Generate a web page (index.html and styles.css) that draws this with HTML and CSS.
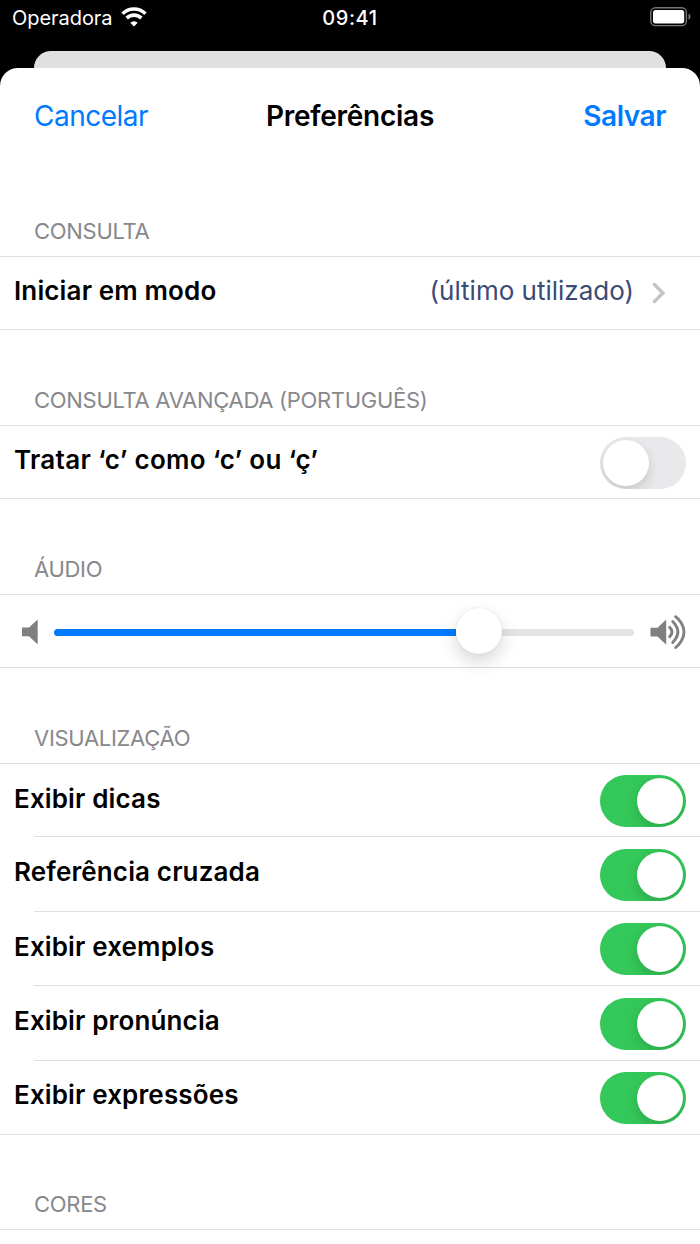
FILE: index.html
```
<!DOCTYPE html>
<html lang="pt-br">
<head>
    <meta charset="UTF-8">
    <meta name="viewport" content="width=device-width, initial-scale=1.0">
    <link rel="stylesheet" href="styles.css">
    <title>Preferências</title>
</head>
<body>
    <div class="status-bar">
        <div class="carrier">
            <span>Operadora</span>
            <svg class="wifi" width="26" height="20" viewBox="0 0 26 20">
                <path d="M1.6 6.7 A16.3 16.3 0 0 1 24.4 6.7" fill="none" stroke="#fff" stroke-width="3.6"/>
                <path d="M5.7 11.1 A10.4 10.4 0 0 1 20.3 11.1" fill="none" stroke="#fff" stroke-width="3.6"/>
                <path d="M13 19.4 L9.3 15.7 A5.3 5.3 0 0 1 16.7 15.7 Z" fill="#fff"/>
            </svg>
        </div>
        <span class="clock">09:41</span>
        <div class="battery-box">
            <svg width="42" height="20" viewBox="0 0 42 20">
                <rect x="0.8" y="0.8" width="35.6" height="17.8" rx="4.6" fill="none" stroke="#777" stroke-width="1.4"/>
                <rect x="3" y="3" width="31.2" height="13.4" rx="2.6" fill="#fff"/>
                <path d="M38.5 6.6 Q40.6 7.6 40.6 9.7 Q40.6 11.8 38.5 12.8 Z" fill="#777"/>
            </svg>
        </div>
    </div>
    <div class="back-sheet"></div>
    <main class="sheet">
        <nav class="navbar">
            <a class="cancel">Cancelar</a>
            <h1>Preferências</h1>
            <a class="save">Salvar</a>
        </nav>

        <section>
            <h2>CONSULTA</h2>
            <div class="list">
                <div class="row">
                    <span class="label">Iniciar em modo</span>
                    <span class="value">(último utilizado)</span>
                    <svg class="chevron" width="14" height="22" viewBox="0 0 14 22">
                        <path d="M2.4 2.4 L10.8 11 L2.4 19.6" fill="none" stroke="#c4c4c6" stroke-width="3.5" stroke-linecap="round" stroke-linejoin="miter"/>
                    </svg>
                </div>
            </div>
        </section>

        <section>
            <h2>CONSULTA AVANÇADA (PORTUGUÊS)</h2>
            <div class="list">
                <div class="row">
                    <span class="label treat">Tratar ‘c’ como ‘c’ ou ‘ç’</span>
                    <div class="switch"></div>
                </div>
            </div>
        </section>

        <section>
            <h2>ÁUDIO</h2>
            <div class="list">
                <div class="row volume">
                    <svg width="16" height="26" viewBox="0 0 16 26">
                        <path d="M0 8.6 H7 L15.7 0.4 V25.6 L7 17.2 H0 Z" fill="#808080"/>
                    </svg>
                    <div class="slider">
                        <div class="fill"></div>
                        <div class="thumb"></div>
                        <div class="rest"></div>
                    </div>
                    <svg width="36" height="36" viewBox="0 0 36 36">
                        <path d="M0.5 13.8 H7.5 L16.2 5.6 V30.8 L7.5 22.4 H0.5 Z" fill="#808080"/>
                        <g fill="none" stroke="#808080" stroke-width="2.9" stroke-linecap="round">
                            <path d="M19.7 13.4 Q24.3 18 19.7 22.6"/>
                            <path d="M22.7 7.6 Q33 18 22.7 28.4"/>
                            <path d="M25.6 2.7 Q29 5.3 31.2 8.8 Q36.8 18 31.2 27.2 Q29 30.7 25.6 33.5"/>
                        </g>
                    </svg>
                </div>
            </div>
        </section>

        <section>
            <h2>VISUALIZAÇÃO</h2>
            <div class="list">
                <div class="row">
                    <span class="label">Exibir dicas</span>
                    <div class="switch on"></div>
                </div>
                <div class="row">
                    <span class="label">Referência cruzada</span>
                    <div class="switch on"></div>
                </div>
                <div class="row">
                    <span class="label">Exibir exemplos</span>
                    <div class="switch on"></div>
                </div>
                <div class="row">
                    <span class="label">Exibir pronúncia</span>
                    <div class="switch on"></div>
                </div>
                <div class="row">
                    <span class="label">Exibir expressões</span>
                    <div class="switch on"></div>
                </div>
            </div>
        </section>

        <section>
            <h2 class="colors">CORES</h2>
            <div class="list"></div>
        </section>
    </main>
</body>
</html>
```
FILE: styles.css
```
*{
    margin: 0;
    padding: 0;
    box-sizing: border-box;
}
body{
    width: 700px;
    height: 1244px;
    overflow: hidden;
    display: flex;
    flex-direction: column;
    background-color: #000;
    font-family: Inter, "Liberation Sans", sans-serif;
}
.status-bar{
    height: 51px;
    padding: 6px 8px 0;
    display: grid;
    grid-template-columns: 1fr auto 1fr;
    align-items: start;
    color: #fff;
    font-size: 20px;
    line-height: 24px;
}
.carrier{
    display: flex;
    gap: 8px;
    padding-left: 4px;
    letter-spacing: -0.05px;
}
.wifi{
    margin-top: 1px;
}
.clock{
    font-weight: 500;
    letter-spacing: 0.6px;
}
.battery-box{
    display: flex;
    justify-content: flex-end;
    padding-top: 1px;
}
.back-sheet{
    height: 17px;
    margin: 0 34px;
    background-color: #e0e0e0;
    border-radius: 17px 17px 0 0;
}
.sheet{
    flex: 1;
    background-color: #fff;
    border-radius: 18px 18px 0 0;
}
.navbar{
    height: 93px;
    padding: 31px 34px 0;
    display: grid;
    grid-template-columns: 1fr auto 1fr;
    font-size: 28px;
    line-height: 34px;
    color: #007aff;
}
.navbar h1{
    font-size: 28px;
    font-weight: 600;
    color: #000;
    letter-spacing: -0.25px;
}
.cancel{
    letter-spacing: -0.5px;
}
.save{
    text-align: right;
    font-weight: 600;
    letter-spacing: -0.4px;
}
section h2{
    height: 95px;
    padding: 56px 34px 0;
    font-size: 22px;
    line-height: 28px;
    font-weight: 400;
    letter-spacing: -0.3px;
    color: #88888c;
}
section h2.colors{
    height: 94px;
    padding-top: 55px;
}
.list{
    border-top: 1px solid #dfdfe0;
}
.row{
    height: 73px;
    padding: 0 14px;
    display: flex;
    align-items: center;
    border-bottom: 1px solid #dfdfe0;
}
.row + .row{
    height: 74.5px;
}
.row:not(:last-child){
    border-bottom: none;
    background: linear-gradient(#dfdfe0, #dfdfe0) 34px 100% / 100% 1px no-repeat;
}
.label{
    flex: 1;
    font-size: 26px;
    line-height: 32px;
    font-weight: 600;
    letter-spacing: 0.14px;
    padding-bottom: 4px;
}
.label.treat{
    letter-spacing: 0.3px;
}
.value{
    font-size: 26px;
    line-height: 32px;
    padding-bottom: 4px;
    color: #3b4b74;
}
.chevron{
    margin: 0 20px 0 18px;
}
.switch{
    width: 86px;
    height: 52px;
    margin-top: 1px;
    padding: 3px;
    display: flex;
    overflow: hidden;
    border-radius: 26px;
    background-color: #e9e9eb;
}
.switch::before{
    content: "";
    width: 46px;
    height: 46px;
    border-radius: 50%;
    background-color: #fff;
    box-shadow: 0 5px 12px rgba(0, 0, 0, 0.15);
}
.switch.on{
    justify-content: flex-end;
    background-color: #34c759;
}
.volume{
    padding: 2px 14px 0 22px;
}
.slider{
    flex: 1;
    display: flex;
    align-items: center;
    margin: 0 16px;
}
.fill{
    width: 402px;
    height: 7px;
    border-radius: 4px 0 0 4px;
    background-color: #007aff;
}
.thumb{
    width: 46px;
    height: 46px;
    margin-top: -3px;
    border-radius: 50%;
    background-color: #fff;
    box-shadow: 0 0 2px rgba(0, 0, 0, 0.12), 0 8px 18px rgba(0, 0, 0, 0.16);
    z-index: 1;
}
.rest{
    flex: 1;
    height: 7px;
    border-radius: 0 4px 4px 0;
    background-color: #e4e4e5;
}
```
